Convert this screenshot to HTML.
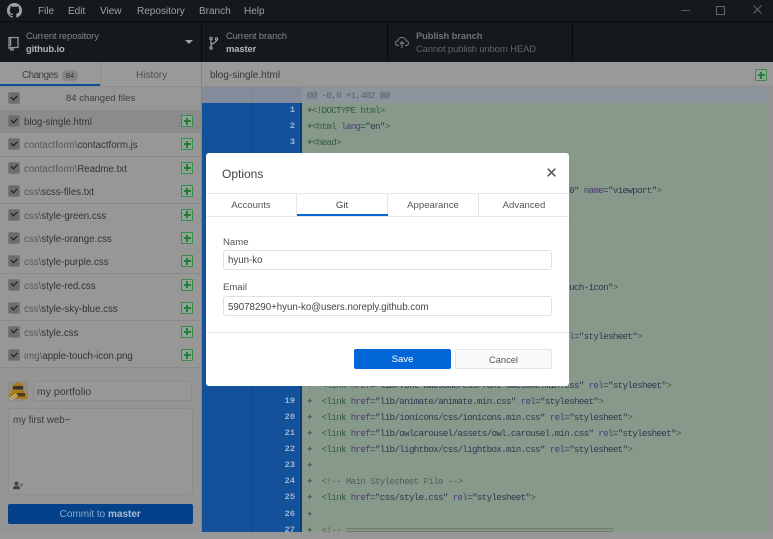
<!DOCTYPE html>
<html><head><meta charset="utf-8"><style>
html,body{margin:0;padding:0}
body{width:773px;height:532px;overflow:hidden;background:#979797;position:relative;font-family:"Liberation Sans",sans-serif;font-size:10px;color:#333;filter:blur(.35px)}
div,span.a,svg{position:absolute}
.m{top:5px;color:#9da1a5;font-size:10px;line-height:13px}
.t1{color:#83878b;font-size:9.4px;letter-spacing:-.12px;line-height:12px}
.t2{color:#b4b7ba;font-size:9.4px;letter-spacing:-.1px;font-weight:bold;line-height:12px}
.row{left:0;width:201px;height:23px;border-bottom:1px solid #8b8b8b;background:#979797}
.row b{font-weight:normal;position:absolute;left:24px;top:6px;font-size:9.7px;line-height:13px;color:#303338;white-space:nowrap}
.row i{font-style:normal;color:#54575b}
.cb{left:8px;top:5px;width:10px;height:10px;border:1px solid #787878;border-radius:2px;background:#6c6c6c}
.cb:after{content:"";position:absolute;left:2px;top:1.500px;width:5px;height:2.500px;border-left:1.500px solid #161616;border-bottom:1.500px solid #161616;transform:rotate(-45deg)}
.pl{left:181px;top:5px;width:10px;height:10px;border:1px solid #3c8a4e;border-radius:1px;background:#8fa593}
.pl:before{content:"";position:absolute;left:1.500px;top:4px;width:7px;height:2px;background:#2a7a3c}
.pl:after{content:"";position:absolute;left:4px;top:1.500px;width:2px;height:7px;background:#2a7a3c}
.ln{left:253px;width:42px;text-align:right;font:bold 8.6px/16px "Liberation Mono",monospace;color:#9fb5d2;height:16px;margin-top:.5px}
.c{left:307px;height:16px;white-space:pre;font:9.2px/16px "Liberation Mono",monospace;letter-spacing:-.66px;color:#2c3a48;margin-top:.5px}
.g{color:#2f5f3a}.p{color:#4d3a78}.s{color:#2c3a4e}.k{color:#565f5a}
.tab{top:194px;height:22px;line-height:24px;text-align:center;font-size:9.6px;color:#555;border-right:1px solid #e7e8ea;box-sizing:border-box}
.lab{left:223px;font-size:9.6px;color:#555;line-height:13px}
.inp{left:223px;height:18px;border:1px solid #dfe1e4;border-radius:3px;background:#fff;padding-left:4px;line-height:20px;font-size:9.7px;color:#444;box-sizing:content-box;width:323px}
</style></head><body>

<!-- title bar -->
<div style="left:0;top:0;width:773px;height:62px;background:#15191d"></div>
<div style="left:0;top:21px;width:773px;height:1px;background:#0a0c0e"></div>
<svg style="left:7px;top:3px" width="15" height="15" viewBox="0 0 16 16"><path fill="#a3a6a9" d="M8 0C3.58 0 0 3.58 0 8c0 3.54 2.29 6.53 5.47 7.59.4.07.55-.17.55-.38 0-.19-.01-.82-.01-1.49-2.01.37-2.53-.49-2.69-.94-.09-.23-.48-.94-.82-1.13-.28-.15-.68-.52-.01-.53.63-.01 1.08.58 1.23.82.72 1.21 1.87.87 2.33.66.07-.52.28-.87.51-1.07-1.78-.2-3.64-.89-3.64-3.95 0-.87.31-1.59.82-2.15-.08-.2-.36-1.02.08-2.12 0 0 .67-.21 2.2.82.64-.18 1.32-.27 2-.27.68 0 1.36.09 2 .27 1.53-1.04 2.2-.82 2.2-.82.44 1.1.16 1.92.08 2.12.51.56.82 1.27.82 2.15 0 3.07-1.87 3.75-3.65 3.95.29.25.54.73.54 1.48 0 1.07-.01 1.93-.01 2.2 0 .21.15.46.55.38A8.013 8.013 0 0016 8c0-4.42-3.58-8-8-8z"/></svg>
<div class="m" style="left:38px">File</div>
<div class="m" style="left:68px">Edit</div>
<div class="m" style="left:100px">View</div>
<div class="m" style="left:137px">Repository</div>
<div class="m" style="left:199px">Branch</div>
<div class="m" style="left:244px">Help</div>
<div style="left:681px;top:10px;width:9px;height:1px;background:#55585b"></div>
<div style="left:716px;top:6px;width:7px;height:7px;border:1px solid #66696c"></div>
<svg style="left:753px;top:5px" width="9" height="9" viewBox="0 0 9 9"><path d="M.5.5l8 8M8.500.5l-8 8" stroke="#66696c" fill="none"/></svg>

<!-- toolbar -->
<div style="left:201px;top:22px;width:1px;height:40px;background:#08090b"></div>
<div style="left:387px;top:22px;width:1px;height:40px;background:#08090b"></div>
<div style="left:572px;top:22px;width:1px;height:40px;background:#08090b"></div>
<svg style="left:8px;top:36px" width="11" height="15" viewBox="0 0 11 15"><path d="M1 13V1.500h9V11.500H1.500M3 11.500v2.500l1-.8 1 .8v-2.500" fill="none" stroke="#94979a" stroke-width="1.300"/><rect x="2" y="2" width="1.200" height="8" fill="#94979a"/></svg>
<div class="t1" style="left:26px;top:30px">Current repository</div>
<div class="t2" style="left:26px;top:43px">github.io</div>
<div style="left:185px;top:40px;border-left:4px solid transparent;border-right:4px solid transparent;border-top:4px solid #a0a3a6"></div>
<svg style="left:209px;top:36px" width="10" height="14" viewBox="0 0 10 14"><g fill="none" stroke="#a5a8ab" stroke-width="1.100"><circle cx="2" cy="2.500" r="1.200"/><circle cx="7.500" cy="3" r="1.200"/><circle cx="2" cy="12" r="1.200"/><path d="M2 4v7M7.500 4.300c0 3-5.500 2.500-5.500 5.200"/></g></svg>
<div class="t1" style="left:226px;top:30px">Current branch</div>
<div class="t2" style="left:226px;top:43px">master</div>
<svg style="left:395px;top:36px" width="14" height="13" viewBox="0 0 14 13"><path d="M4 9.500H3C1.500 9.500.5 8.500.5 7.200.5 6 1.500 5 2.700 5 3 3 4.700 1.500 7 1.500S11 3 11.300 5c1.200 0 2.200 1 2.200 2.200 0 1.300-1 2.300-2.500 2.300h-1M7 12V6M4.800 8L7 5.800 9.200 8" fill="none" stroke="#7d8083" stroke-width="1.100"/></svg>
<div class="t2" style="left:416px;top:30px;color:#6f7275">Publish branch</div>
<div class="t1" style="left:416px;top:43px;color:#62666a">Cannot publish unborn HEAD</div>

<!-- sidebar tabs -->
<div style="left:0;top:62px;width:773px;height:25px;background:#999;border-bottom:1px solid #8d8d8d;box-sizing:border-box"></div>
<div style="left:201px;top:62px;width:1px;height:470px;background:#858585"></div>
<div style="left:100px;top:62px;width:1px;height:25px;background:#8c8c8c"></div>
<div style="left:0;top:83.500px;width:100px;height:2.500px;background:#0e4e97"></div>
<div style="left:22px;top:69px;font-size:10px;letter-spacing:-.6px;line-height:13px;color:#3d4045">Changes</div>
<div style="left:62px;top:70px;width:16px;height:11px;border-radius:6px;background:#858585;font-size:7.500px;line-height:11px;text-align:center;color:#333">84</div>
<div style="left:136px;top:69px;font-size:10px;line-height:13px;color:#4c4f52">History</div>
<div style="left:210px;top:69px;font-size:10px;line-height:13px;color:#33363b">blog-single.html</div>
<div class="pl" style="left:755px;top:69px"></div>

<!-- file list -->
<div class="row" style="top:87px;height:22.500px"><div class="cb"></div><b style="left:66px;top:5px;color:#3b3e42;font-size:9.500px">84 changed files</b></div>
<div class="row" style="top:110px;background:#8b8b8b"><div class="cb"></div><b>blog-single.html</b><div class="pl"></div></div>
<div class="row" style="top:133.400px"><div class="cb"></div><b><i>contactform\</i>contactform.js</b><div class="pl"></div></div>
<div class="row" style="top:156.800px"><div class="cb"></div><b><i>contactform\</i>Readme.txt</b><div class="pl"></div></div>
<div class="row" style="top:180.200px"><div class="cb"></div><b><i>css\</i>scss-files.txt</b><div class="pl"></div></div>
<div class="row" style="top:203.600px"><div class="cb"></div><b><i>css\</i>style-green.css</b><div class="pl"></div></div>
<div class="row" style="top:227px"><div class="cb"></div><b><i>css\</i>style-orange.css</b><div class="pl"></div></div>
<div class="row" style="top:250.400px"><div class="cb"></div><b><i>css\</i>style-purple.css</b><div class="pl"></div></div>
<div class="row" style="top:273.800px"><div class="cb"></div><b><i>css\</i>style-red.css</b><div class="pl"></div></div>
<div class="row" style="top:297.200px"><div class="cb"></div><b><i>css\</i>style-sky-blue.css</b><div class="pl"></div></div>
<div class="row" style="top:320.600px"><div class="cb"></div><b><i>css\</i>style.css</b><div class="pl"></div></div>
<div class="row" style="top:344px"><div class="cb"></div><b><i>img\</i>apple-touch-icon.png</b><div class="pl"></div></div>

<!-- commit area -->
<div style="left:0;top:367px;width:201px;height:165px;background:#959595;border-top:1px solid #8b8b8b;box-sizing:border-box"></div>
<svg style="left:8px;top:381px" width="20" height="20" viewBox="0 0 20 20"><rect width="20" height="20" rx="2" fill="#8f8d84"/><path d="M4 9C4 4 7 1.500 10 1.500S16 4 16 9v3h3v6H1v-6h3z" fill="#a87c1e"/><rect x="5" y="5" width="10" height="3.500" fill="#37332c"/><rect x="9" y="12" width="8" height="3.500" fill="#4a3c1c"/><path d="M1 18L8 13M3 19l7-5" stroke="#c4c0b5" stroke-width="1"/></svg>
<div style="left:33px;top:381px;width:154px;height:18px;border:1px solid #8c8c8c;border-radius:3px;background:#979797;padding-left:3px;line-height:20px;font-size:10.500px;color:#3a3a3a;box-sizing:content-box">my portfolio</div>
<div style="left:8px;top:408px;width:179px;height:85px;border:1px solid #8c8c8c;border-radius:3px;background:#979797;padding-left:4px;line-height:24px;font-size:9.700px;color:#3a3a3a;box-sizing:content-box">my first web~</div>
<svg style="left:13px;top:481px" width="11" height="9" viewBox="0 0 11 9"><circle cx="3.500" cy="2.500" r="2" fill="#444"/><path d="M0 8c0-2 1.500-3 3.500-3S7 6 7 8zM8.500 2v4M6.500 4h4" fill="#444" stroke="#444" stroke-width=".6"/></svg>
<div style="left:8px;top:504px;width:184.500px;height:20px;background:#03428a;border-radius:2px;text-align:center;line-height:21px;font-size:10px;color:#8fa9c8">Commit to <span style="font-weight:bold;color:#a9bdd6">master</span></div>

<!-- diff -->
<div style="left:202px;top:87px;width:565px;height:445px;background:#87998a"></div>
<div style="left:767px;top:87px;width:6px;height:445px;background:#929292"></div>
<div style="left:202px;top:87px;width:565px;height:16px;background:#8e949e"></div>
<div style="left:202px;top:87px;width:100px;height:16px;background:#848c9b"></div>
<div style="left:252px;top:87px;width:1px;height:16px;background:#7d8594"></div>
<div style="left:202px;top:103px;width:100px;height:429px;background:#13529b"></div>
<div style="left:252px;top:103px;width:1px;height:429px;background:#0e4687"></div>
<div style="left:300px;top:103px;width:2px;height:429px;background:#0b3f7c"></div>
<div class="c" style="top:87px;color:#5d6168">@@ -0,0 +1,402 @@</div>

<div class="ln" style="top:101px">1</div><div class="c" style="top:102px">+<span class="g">&lt;!DOCTYPE html&gt;</span></div>
<div class="ln" style="top:117px">2</div><div class="c" style="top:118px">+<span class="g">&lt;html</span> <span class="p">lang</span>=<span class="s">"en"</span><span class="g">&gt;</span></div>
<div class="ln" style="top:133px">3</div><div class="c" style="top:134px">+<span class="g">&lt;head&gt;</span></div>
<div class="c" style="top:182px">+  <span class="g">&lt;meta</span> <span class="p">content</span>=<span class="s">"width=device-width, initial-scale=1.0"</span> <span class="p">name</span>=<span class="s">"viewport"</span><span class="g">&gt;</span></div>
<div class="c" style="top:279px">+  <span class="g">&lt;link</span> <span class="p">href</span>=<span class="s">"img/apple-touch-icon.png"</span> <span class="p">rel</span>=<span class="s">"apple-touch-icon"</span><span class="g">&gt;</span></div>
<div class="c" style="top:328px">+  <span class="g">&lt;link</span> <span class="p">href</span>=<span class="s">"lib/bootstrap/css/bootstrap.min.css"</span> <span class="p">rel</span>=<span class="s">"stylesheet"</span><span class="g">&gt;</span></div>
<div class="c" style="top:377px">+  <span class="g">&lt;link</span> <span class="p">href</span>=<span class="s">"lib/font-awesome/css/font-awesome.min.css"</span> <span class="p">rel</span>=<span class="s">"stylesheet"</span><span class="g">&gt;</span></div>
<div class="ln" style="top:392px">19</div><div class="c" style="top:393px">+  <span class="g">&lt;link</span> <span class="p">href</span>=<span class="s">"lib/animate/animate.min.css"</span> <span class="p">rel</span>=<span class="s">"stylesheet"</span><span class="g">&gt;</span></div>
<div class="ln" style="top:408px">20</div><div class="c" style="top:409px">+  <span class="g">&lt;link</span> <span class="p">href</span>=<span class="s">"lib/ionicons/css/ionicons.min.css"</span> <span class="p">rel</span>=<span class="s">"stylesheet"</span><span class="g">&gt;</span></div>
<div class="ln" style="top:424px">21</div><div class="c" style="top:425px">+  <span class="g">&lt;link</span> <span class="p">href</span>=<span class="s">"lib/owlcarousel/assets/owl.carousel.min.css"</span> <span class="p">rel</span>=<span class="s">"stylesheet"</span><span class="g">&gt;</span></div>
<div class="ln" style="top:440px">22</div><div class="c" style="top:441px">+  <span class="g">&lt;link</span> <span class="p">href</span>=<span class="s">"lib/lightbox/css/lightbox.min.css"</span> <span class="p">rel</span>=<span class="s">"stylesheet"</span><span class="g">&gt;</span></div>
<div class="ln" style="top:456px">23</div><div class="c" style="top:457px">+</div>
<div class="ln" style="top:472px">24</div><div class="c" style="top:473px">+  <span class="k">&lt;!-- Main Stylesheet File --&gt;</span></div>
<div class="ln" style="top:488px">25</div><div class="c" style="top:489px">+  <span class="g">&lt;link</span> <span class="p">href</span>=<span class="s">"css/style.css"</span> <span class="p">rel</span>=<span class="s">"stylesheet"</span><span class="g">&gt;</span></div>
<div class="ln" style="top:505px">26</div><div class="c" style="top:506px">+</div>
<div class="ln" style="top:521px">27</div><div class="c" style="top:522px">+  <span class="k">&lt;!-- =======================================================</span></div>

<!-- modal -->
<div style="left:206px;top:153px;width:363px;height:233px;background:#fff;border-radius:3px"></div>
<div style="left:222px;top:167px;font-size:12px;line-height:14px;color:#444;font-weight:normal">Options</div>
<svg style="left:547px;top:168px" width="9" height="9" viewBox="0 0 9 9"><path d="M.7.700l7.600 7.600M8.300.700L.7 8.300" stroke="#555" stroke-width="1.500" fill="none"/></svg>
<div style="left:206px;top:193px;width:363px;height:1px;background:#e7e8ea"></div>
<div style="left:206px;top:216px;width:363px;height:1px;background:#e7e8ea"></div>
<div class="tab" style="left:206px;width:91px">Accounts</div>
<div class="tab" style="left:297px;width:91px;color:#444">Git</div>
<div class="tab" style="left:388px;width:91px">Appearance</div>
<div class="tab" style="left:479px;width:90px;border-right:0">Advanced</div>
<div style="left:297px;top:213.500px;width:90.500px;height:2.500px;background:#0366d6"></div>
<div class="lab" style="left:223px;top:236px">Name</div>
<div class="inp" style="top:250px">hyun-ko</div>
<div class="lab" style="left:223px;top:281px">Email</div>
<div class="inp" style="top:296px;line-height:21px">59078290+hyun-ko@users.noreply.github.com</div>
<div style="left:206px;top:332px;width:363px;height:1px;background:#e7e8ea"></div>
<div style="left:354px;top:349px;width:97px;height:20px;background:#0366d6;border-radius:2px;text-align:center;line-height:22px;font-size:9.600px;color:#fff">Save</div>
<div style="left:455px;top:349px;width:95px;height:18px;background:#f9fafb;border:1px solid #e2e4e7;border-radius:2px;text-align:center;line-height:20px;font-size:9.300px;color:#555;box-sizing:content-box">Cancel</div>
</body></html>
